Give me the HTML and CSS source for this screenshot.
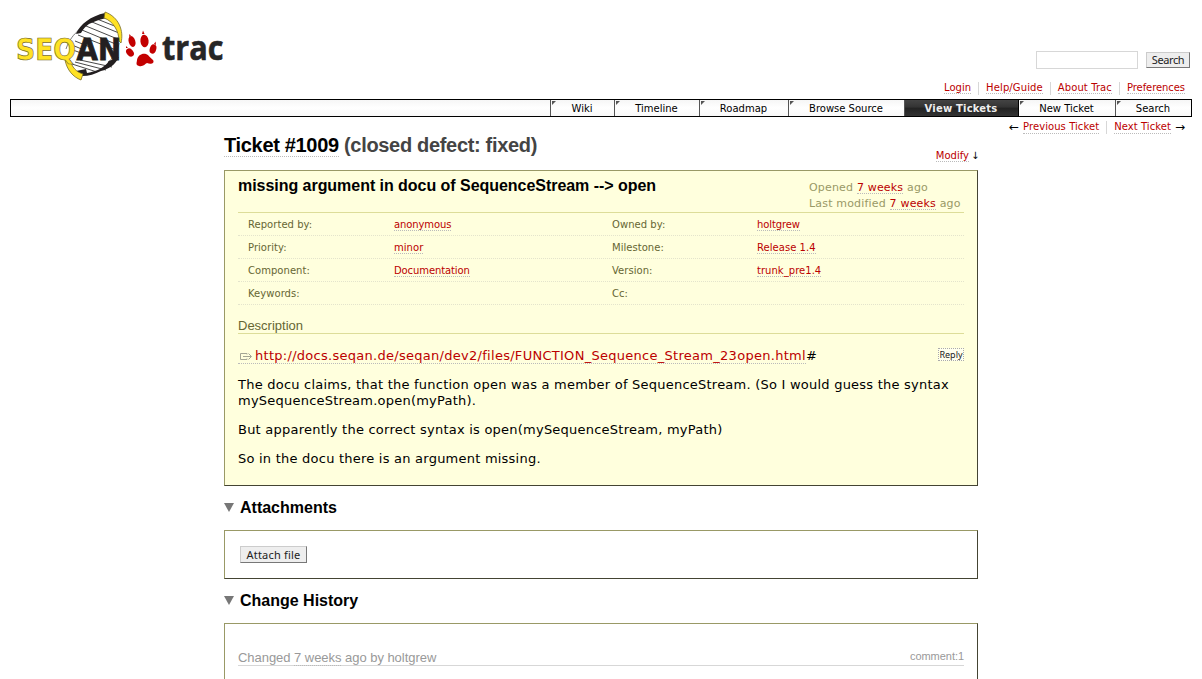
FILE: index.html
```
<!DOCTYPE html>
<html lang="en">
<head>
<meta charset="utf-8">
<title>#1009 (missing argument in docu of SequenceStream --&gt; open) – SeqAn</title>
<link rel="stylesheet" href="styles.css">
</head>
<body>
<header class="banner">
  <svg class="logo" width="218" height="76" viewBox="10 6 218 76" role="img" aria-label="SeqAn trac">
    <path d="M69 58C66 42 80 22 105 14L119 27C124 45 108 66 86 74L74 68Z" fill="#fff"/>
    <path d="M92 22L119 33M86 26L120 40M82 30L118 45M97 19L117 27M78 35L116 50M75 62L106 70M80 60L112 67M72 64L97 72M75 41L90 47M70 49L84 54M72 45L84 50" stroke="#333" stroke-width=".9"/>
    <path d="M66 49C69 40 74 34 79 30M119 43C118 51 113 59 108 62" fill="none" stroke="#555" stroke-width=".8"/>
    <path d="M76 34C80 24 91 16 105 13L107 18C97 20 94 22 89 24C86 26 83 29 81 33Z" fill="#231f20"/>
    <path d="M76 71L86 69L87 73C97 71 104 68 109 61L119 57C115 65 109 69 101 71C95 74 89 76 82 76Z" fill="#231f20"/>
    <path d="M105 12C119 17 124 31 121 43L119 41C119 31 113 21 104 18Z" fill="#ffe224" stroke="#776c28" stroke-width=".8"/>
    <path d="M65 60C67 70 73 77 81 80L83 74C76 72 72 67 70 60Z" fill="#ffe224" stroke="#776c28" stroke-width=".8"/>
    <text class="seq" x="16" y="60" textLength="60" lengthAdjust="spacingAndGlyphs">SEQ</text>
    <text class="an" x="76.500" y="60" textLength="44.500" lengthAdjust="spacingAndGlyphs">AN</text>
    <g fill="#c30000">
      <ellipse cx="132" cy="41.500" rx="3.300" ry="5.600" transform="rotate(-17 132 41.500)"/>
      <ellipse cx="144.500" cy="41" rx="4.100" ry="6.200" transform="rotate(-6 144.500 41)"/>
      <ellipse cx="130" cy="52.500" rx="3.300" ry="4.600" transform="rotate(-38 130 52.500)"/>
      <ellipse cx="153" cy="49" rx="3.200" ry="4.800" transform="rotate(17 153 49)"/>
      <path d="M137 60C138 55 142 53 146 54C149 55 150 58 153 60C155 63 151 65 147 63C145 64 143 67 139 66C135 65 137 62 137 60Z"/>
      <path d="M129 37L129.500 34L131 36ZM142 34L143 30.500L144.500 34ZM126 48L126 46L128 48ZM154 44L155.500 41.500L156 45Z"/>
    </g>
    <text class="trac" x="162" y="60" textLength="61.500" lengthAdjust="spacingAndGlyphs">trac</text>
  </svg>
  <form class="search"><input type="text" class="query" aria-label="Search"><button type="button" class="btn btn-search">Search</button></form>
</header>
<nav class="metanav"><span><a>Login</a></span><span><a>Help/Guide</a></span><span><a>About Trac</a></span><span><a>Preferences</a></span></nav>
<nav class="mainnav">
  <a class="tab wiki">Wiki</a><a class="tab timeline">Timeline</a><a class="tab roadmap">Roadmap</a><a class="tab browse">Browse Source</a><a class="tab active">View Tickets</a><a class="tab new">New Ticket</a><a class="tab find">Search</a>
</nav>
<nav class="ctxtnav"><span><i class="arrow">←</i> <a>Previous Ticket</a></span><span><a>Next Ticket</a> <i class="arrow">→</i></span></nav>
<main class="content">
  <div class="top">
    <h1><a>Ticket #1009</a> <span>(closed defect: fixed)</span></h1>
    <div class="modify"><a>Modify</a><i>↓</i></div>
  </div>
  <section class="ticket">
    <div class="head">
      <h2>missing argument in docu of SequenceStream --&gt; open</h2>
      <div class="date"><p>Opened <a>7 weeks</a> ago</p><p>Last modified <a>7 weeks</a> ago</p></div>
    </div>
    <div class="props">
      <div class="row"><span>Reported by:</span><b><a class="tight">anonymous</a></b><span>Owned by:</span><b><a class="tight">holtgrew</a></b></div>
      <div class="row"><span>Priority:</span><b><a>minor</a></b><span>Milestone:</span><b><a>Release 1.4</a></b></div>
      <div class="row"><span>Component:</span><b><a class="tight">Documentation</a></b><span>Version:</span><b><a>trunk_pre1.4</a></b></div>
      <div class="row"><span>Keywords:</span><b></b><span>Cc:</span><b></b></div>
    </div>
    <h3>Description</h3>
    <div class="desc">
      <div class="linkrow">
        <p><a class="ext"><svg width="13" height="9" viewBox="0 0 13 9" fill="none" stroke="#a3a594"><path d="M8 2.500V1.500H1.500V7.500H8V6.500M4 4.500H12M9.500 1.500L12.500 4.500L9.500 7.500"/></svg><span>http://docs.seqan.de/seqan/dev2/files/FUNCTION_Sequence_Stream_23open.html</span></a><span>#</span></p>
        <button type="button" class="reply">Reply</button>
      </div>
      <p>The docu claims, that the function open was a member of SequenceStream. (So I would guess the syntax<br>mySequenceStream.open(myPath).</p>
      <p>But apparently the correct syntax is open(mySequenceStream, myPath)</p>
      <p>So in the docu there is an argument missing.</p>
    </div>
  </section>
  <h2 class="fold"><i></i>Attachments</h2>
  <section class="panel attach"><button type="button" class="btn">Attach file</button></section>
  <h2 class="fold"><i></i>Change History</h2>
  <section class="panel history">
    <h3 class="change"><span>Changed <a>7 weeks</a> ago by holtgrew</span><small>comment:1</small></h3>
  </section>
</main>
</body>
</html>
```
FILE: styles.css
```
* { box-sizing: border-box; }
html { overflow: hidden; }
body {
  margin: 0;
  height: 679px;
  padding: 6px 10px 0;
  overflow: hidden;
  background: #fff;
  color: #000;
  font: 13px/16px "DejaVu Sans", Verdana, sans-serif;
}
h1, h2, h3, p { margin: 0; }
h1, h2, h3 { font-family: "Liberation Sans", Arial, sans-serif; }
a { color: #b00; text-decoration: none; border-bottom: 1px dotted #bbb; }
i { font-style: normal; }

.banner { display: flex; justify-content: space-between; height: 76px; }
.logo { display: block; overflow: visible; }
.seq, .an { font: bold 30px "DejaVu Sans", sans-serif; }
.seq { fill: #ffe224; stroke: #776c28; stroke-width: .7px; }
.an { fill: #231f20; stroke: #231f20; stroke-width: .8px; }
.trac { font: bold 34px "Open Sans", sans-serif; fill: #262626; stroke: #262626; stroke-width: .6px; }
.search { display: flex; gap: 8px; padding: 45px 2px 0 0; align-items: flex-start; }
.query { width: 102px; height: 18px; padding: 0; border: 1px solid #d7d7d7; outline: 0; }
.btn {
  height: 17px;
  width: 67px;
  padding: 0;
  border: 1px solid;
  border-color: #ccc #777 #777 #ccc;
  background: #eee;
  color: #222;
  font: 11px/15px "Noto Sans", sans-serif;
  letter-spacing: .2px;
}
.btn-search { width: 44px; height: 16px; margin-top: 1px; line-height: 14px; letter-spacing: -.4px; }

.metanav, .ctxtnav { display: flex; justify-content: flex-end; font-size: 10px; line-height: 11px; }
.metanav { height: 17px; padding-right: 7px; }
.metanav span { height: 13px; }
.metanav span + span, .ctxtnav span + span { margin-left: 7px; padding-left: 7px; border-left: 1px solid #d7d7d7; }
.metanav span:nth-child(2) { letter-spacing: .12px; }
.metanav span:nth-child(3) { letter-spacing: .1px; }
.metanav span:last-child { letter-spacing: -.07px; }
.ctxtnav { height: 17px; padding: 4px 7px 0 0; letter-spacing: .07px; }
.ctxtnav span { display: flex; gap: 4px; height: 13px; line-height: 12px; }
.ctxtnav a { height: 13px; }
.ctxtnav .arrow { width: 10px; font-size: 12px; letter-spacing: 0; }

.mainnav {
  display: flex;
  justify-content: flex-end;
  width: 1182px;
  height: 18px;
  border: 1px solid #000;
  background: linear-gradient(#f6f6f6, #fff 50%, #f8f8f8);
}
.tab {
  position: relative;
  height: 16px;
  border: 0;
  border-left: 1px solid #555;
  padding-right: 1px;
  color: #000;
  font-size: 10px;
  line-height: 17px;
  text-align: center;
}
.tab::before {
  content: "";
  position: absolute;
  left: 1px;
  top: 1px;
  border-top: 4px solid #555;
  border-right: 4px solid transparent;
}
.wiki { width: 64px; }
.timeline { width: 85px; }
.roadmap { width: 89px; }
.browse { width: 116px; }
.active { width: 114px; color: #eee; font-weight: bold; letter-spacing: .2px; background: linear-gradient(#444, #333 45%, #222 50%, #333); }
.active::before { display: none; }
.new { width: 97px; border-left-color: #000; }
.find { width: 76px; }

.content { width: 754px; margin: 0 214px; }
.top { display: flex; justify-content: space-between; height: 36px; }
h1 { padding-top: 1px; font-size: 20px; line-height: 21px; letter-spacing: -.32px; color: #444; }
h1 a { display: inline-block; height: 22px; color: #000; }
.modify { display: flex; gap: 3px; padding-top: 15px; font-size: 10px; line-height: 14px; }
.modify a { height: 13px; }
.modify i { width: 6px; text-indent: -1px; }

.ticket {
  height: 316px;
  padding: 0 13px;
  border: 1px solid;
  border-color: #996 #443 #443 #996;
  background: #ffd;
}
.head { display: flex; justify-content: space-between; height: 42px; border-bottom: 1px solid #dd9; }
.ticket h2 { padding-top: 6px; font-size: 16px; line-height: 18px; letter-spacing: -.04px; }
.date { width: 155px; padding-top: 9px; color: #996; font-size: 11px; letter-spacing: .18px; white-space: nowrap; }
.date a { display: inline-block; height: 14px; line-height: 16px; vertical-align: top; }
.row {
  display: grid;
  grid-template-columns: 146px 218px 145px 1fr;
  height: 23px;
  padding-left: 10px;
  border-bottom: 1px dotted #e4e4cc;
  font-size: 10px;
  line-height: 23px;
  color: #663;
  letter-spacing: .04px;
}
.row b { font-weight: normal; }
.row a { display: inline-block; height: 12px; line-height: 12px; }
.row .tight { letter-spacing: -.1px; }
.ticket h3 { margin-top: 13px; height: 16px; border-bottom: 1px solid #dd9; color: #663; font-size: 13px; line-height: 15px; font-weight: normal; }
.desc { padding-top: 14px; letter-spacing: .23px; }
.desc p + p { margin-top: 13px; }
.linkrow { display: flex; justify-content: space-between; height: 16px; margin-bottom: 13px; }
.linkrow p { display: flex; }
.ext { display: flex; height: 16px; letter-spacing: .28px; }
.ext svg { margin: 4px 3px 0 1px; }
.reply { width: 26px; height: 13px; padding: 0; border: 1px dotted #aaa; background: #ffe; color: #222; font: 9px/10px "Noto Sans", sans-serif; }

.fold { display: flex; align-items: center; gap: 6px; height: 18px; margin: 13px 0; font-size: 16px; line-height: 18px; }
.fold i { margin-bottom: 1px; border: 5px solid transparent; border-top: 9px solid #777; border-bottom: 0; }
.panel { border: 1px solid; border-color: #996 #443 #443 #996; }
.attach { height: 49px; padding: 15px; display: flex; }
.history { height: 80px; padding: 25px 13px; }
.change {
  display: flex;
  justify-content: space-between;
  height: 17px;
  border-bottom: 1px solid #d7d7d7;
  color: #999;
  font-size: 13px;
  line-height: 17px;
  font-weight: normal;
  letter-spacing: -.04px;
}
.change a { display: inline-block; height: 17px; color: #999; }
.change small { font-size: 11px; line-height: 15px; }
```
